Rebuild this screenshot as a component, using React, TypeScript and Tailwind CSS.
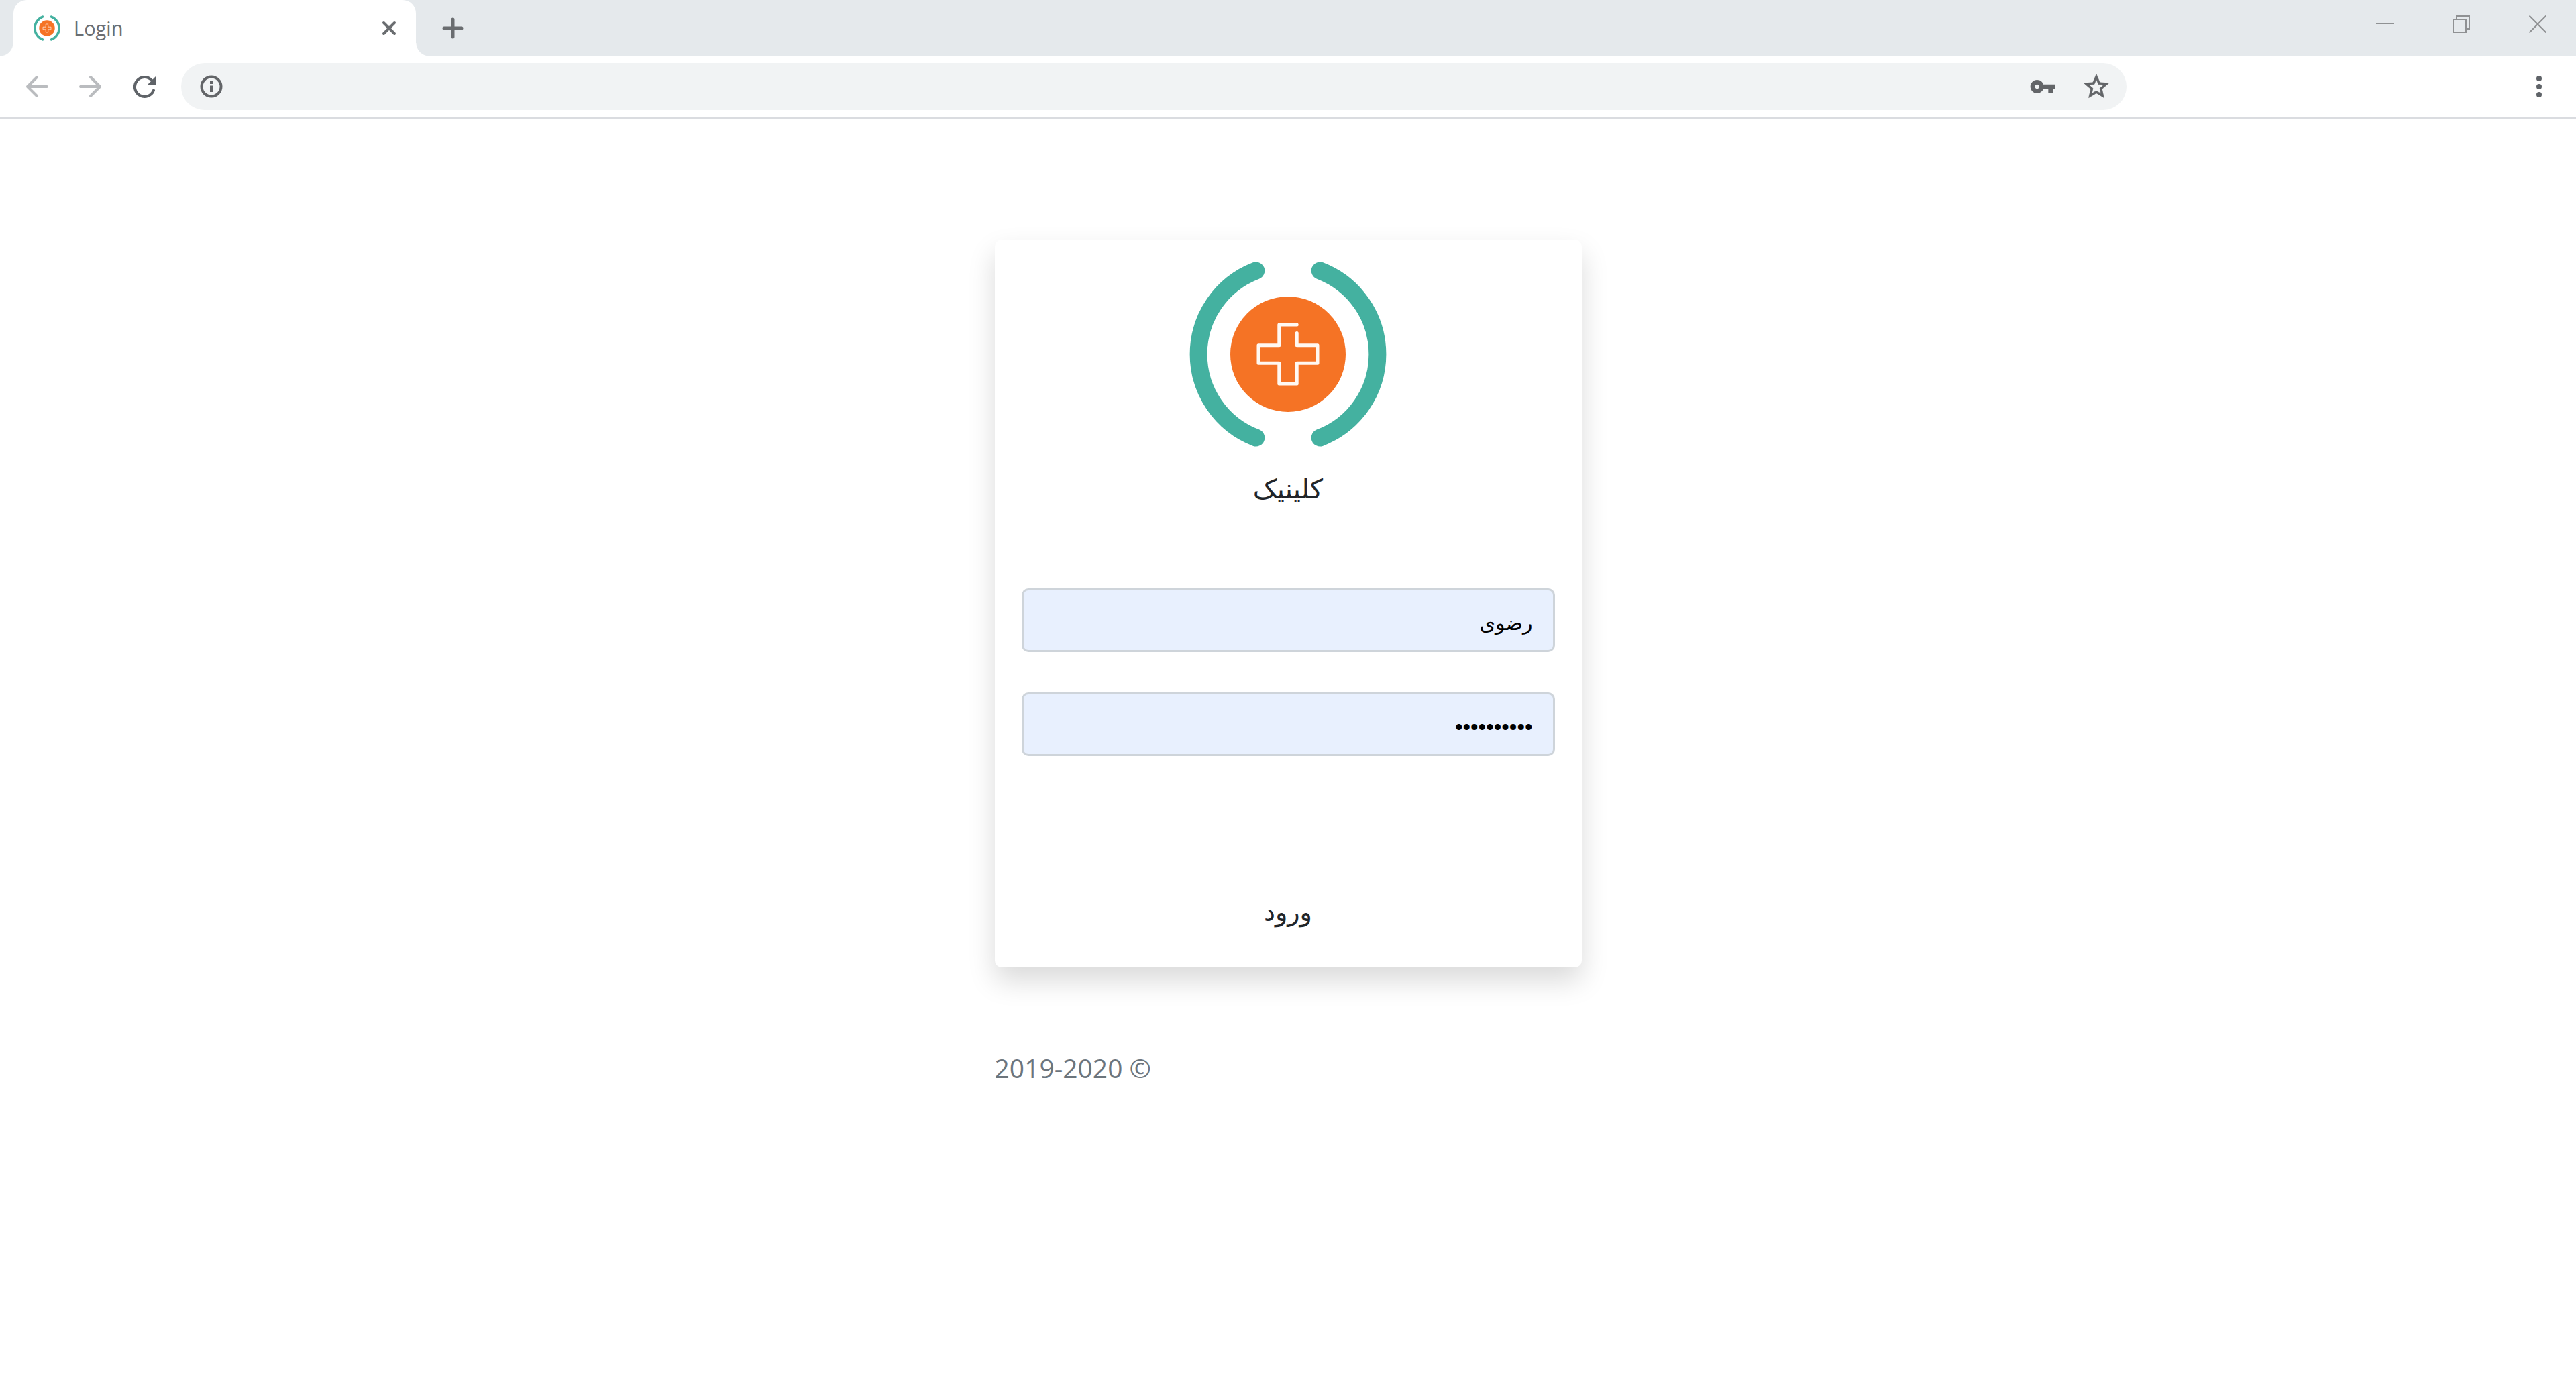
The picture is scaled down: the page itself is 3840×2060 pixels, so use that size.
import React from "react";

function ClinicLogo({ className }: { className: string }) {
  return (
    <svg viewBox="-147 -147 294 294" className={className} fill="none" aria-hidden="true">
      <g stroke="#44b1a0" strokeWidth="26" strokeLinecap="round">
        <path d="M-47.7 -124.5A133.3 133.3 0 0 0 -47.7 124.5" />
        <path d="M47.7 -124.5A133.3 133.3 0 0 1 47.7 124.5" />
      </g>
      <circle r="86" fill="#f57325" />
      <path
        d="M13.2 -31.5V-13.2H44V13.2H13.2V44H-13.2V13.2H-44V-13.2H-13.2V-44H13.2"
        stroke="#fff8f2"
        strokeWidth="5"
        strokeLinecap="round"
        strokeLinejoin="round"
      />
    </svg>
  );
}

function IconButton({ label, className = "", children }: { label: string; className?: string; children: React.ReactNode }) {
  return (
    <button type="button" aria-label={label} className={`flex w-20 shrink-0 items-center justify-center ${className}`}>
      {children}
    </button>
  );
}

function WindowButton({ label, children }: { label: string; children: React.ReactNode }) {
  return (
    <button type="button" aria-label={label} className="flex h-[72px] w-[114px] items-center justify-center">
      <svg viewBox="0 0 26 26" className="size-[26px]" fill="none" stroke="#8f9193" strokeWidth="2">
        {children}
      </svg>
    </button>
  );
}

function TabStrip() {
  return (
    <div className="flex h-[84px] bg-[#e5e9ec] pl-5">
      <div className="relative flex w-[600px] items-center rounded-t-[20px] bg-white pr-[25px] pl-[30px]">
        <span className="absolute bottom-0 -left-5 size-5 bg-[radial-gradient(circle_at_0_0,#e5e9ec_19px,#ffffff_20px)]" />
        <span className="absolute -right-5 bottom-0 size-5 bg-[radial-gradient(circle_at_100%_0,#e5e9ec_19px,#ffffff_20px)]" />
        <ClinicLogo className="size-10" />
        <span className="ml-5 flex-1 text-[29px] text-[#6b6e72]">Login</span>
        <button type="button" aria-label="Close tab" className="flex size-[30px] items-center justify-center">
          <svg viewBox="0 0 22 22" className="size-[22px]" stroke="#6a6d70" strokeWidth="4" strokeLinecap="round">
            <path d="M3 3L19 19M19 3L3 19" />
          </svg>
        </button>
      </div>
      <button type="button" aria-label="New tab" className="ml-[15px] flex w-20 items-center justify-center">
        <svg viewBox="0 0 32 32" className="size-8" stroke="#6a6d70" strokeWidth="5" strokeLinecap="round">
          <path d="M16 3V29M3 16H29" />
        </svg>
      </button>
      <div className="ml-auto flex">
        <WindowButton label="Minimize">
          <path d="M0 12H26" />
        </WindowButton>
        <WindowButton label="Restore">
          <path d="M1 6H20V25H1ZM6 6V1H25V20H20" />
        </WindowButton>
        <WindowButton label="Close">
          <path d="M0.500 0.500L25.500 25.500M25.500 0.500L0.500 25.500" />
        </WindowButton>
      </div>
    </div>
  );
}

function Toolbar() {
  return (
    <div className="flex items-stretch border-b-[3px] border-[#dadce0] bg-white py-[10px] pr-[15px] pl-[15px]">
      <IconButton label="Back">
        <svg viewBox="0 0 34 34" className="size-[34px]" fill="none" stroke="#babcbf" strokeWidth="4" strokeLinecap="round" strokeLinejoin="round">
          <path d="M32 17H3M17 3L3 17L17 31" />
        </svg>
      </IconButton>
      <IconButton label="Forward">
        <svg viewBox="0 0 34 34" className="size-[34px]" fill="none" stroke="#babcbf" strokeWidth="4" strokeLinecap="round" strokeLinejoin="round">
          <path d="M2 17H31M17 3L31 17L17 31" />
        </svg>
      </IconButton>
      <IconButton label="Reload">
        <svg viewBox="0 0 36 34" className="h-[34px] w-9" fill="none">
          <path d="M29 7.500A14.500 14.500 0 1 0 32 22.500" stroke="#5f6368" strokeWidth="4" strokeLinecap="round" />
          <path d="M36 1V15H22Z" fill="#5f6368" />
        </svg>
      </IconButton>
      <div className="ml-[15px] flex h-[70px] flex-1 items-stretch rounded-full bg-[#f1f3f4] pr-[5px] pl-[28px]">
        <button type="button" aria-label="Site information" className="flex items-center">
          <svg viewBox="0 0 34 34" className="size-[34px]" fill="none">
            <circle cx="17" cy="17" r="14.500" stroke="#636568" strokeWidth="4" />
            <path d="M17 9V13M17 15.500V25" stroke="#636568" strokeWidth="4" />
          </svg>
        </button>
        <input aria-label="Address" className="min-w-0 flex-1 bg-transparent px-5 text-[32px] outline-none" />
        <IconButton label="Saved passwords">
          <svg viewBox="0 0 24 24" className="size-10" fill="#636568">
            <path d="M12.650 10C11.830 7.670 9.610 6 7 6c-3.310 0-6 2.690-6 6s2.690 6 6 6c2.610 0 4.830-1.670 5.650-4H17v4h4v-4h2v-4H12.650zM7 14c-1.100 0-2-.9-2-2s.9-2 2-2 2 .9 2 2-.9 2-2 2z" />
          </svg>
        </IconButton>
        <IconButton label="Bookmark this page">
          <svg viewBox="0 0 24 24" className="size-[44px]" fill="#636568" stroke="#636568" strokeWidth="0.4">
            <path d="M22 9.240l-7.190-.62L12 2 9.190 8.630 2 9.240l5.460 4.730L5.820 21 12 17.270 18.180 21l-1.630-7.030L22 9.240zM12 15.400l-3.760 2.270 1-4.280-3.320-2.880 4.380-.38L12 6.100l1.710 4.040 4.380.38-3.320 2.880 1 4.280L12 15.400z" />
          </svg>
        </IconButton>
      </div>
      <IconButton label="Menu" className="ml-[575px]">
        <svg viewBox="0 0 8 32" className="h-8 w-2" fill="#5f6368">
          <circle cx="4" cy="4" r="4" />
          <circle cx="4" cy="16" r="4" />
          <circle cx="4" cy="28" r="4" />
        </svg>
      </IconButton>
    </div>
  );
}

const fieldClass =
  "block h-[95px] w-full rounded-[10px] border-[3px] border-[#ced4da] bg-[#e8f0fe] px-[30px] pt-2 text-right text-black outline-none";

function LoginCard() {
  return (
    <form
      dir="rtl"
      onSubmit={(e) => e.preventDefault()}
      className="flex flex-col rounded-[10px] bg-white px-10 pt-6 pb-8 text-[#212529] shadow-[0_20px_40px_rgba(0,0,0,0.15)]"
    >
      <ClinicLogo className="size-[294px] self-center" />
      <h1 className="mt-6 text-center font-['DejaVu_Sans'] text-[40px] leading-[60px] font-medium">کلینیک</h1>
      <input
        type="text"
        aria-label="نام کاربری"
        defaultValue="رضوی"
        className={`${fieldClass} mt-[118px] font-['DejaVu_Sans'] text-[30px]`}
      />
      <input
        type="password"
        aria-label="رمز عبور"
        defaultValue="clinic2020"
        className={`${fieldClass} mt-[60px] font-['Liberation_Sans'] text-[33px]`}
      />
      <button type="submit" className="mt-[183px] h-[100px] w-full font-['DejaVu_Sans'] text-[38px]">
        ورود
      </button>
    </form>
  );
}

export default function App() {
  return (
    <div className="min-h-screen bg-white font-['Open_Sans',sans-serif]">
      <TabStrip />
      <Toolbar />
      <main className="mx-auto w-full max-w-[875px] pt-[180px]">
        <LoginCard />
        <p className="mt-[120px] text-[39px] leading-[60px] text-[#6c757d]">2019-2020 ©</p>
      </main>
    </div>
  );
}
